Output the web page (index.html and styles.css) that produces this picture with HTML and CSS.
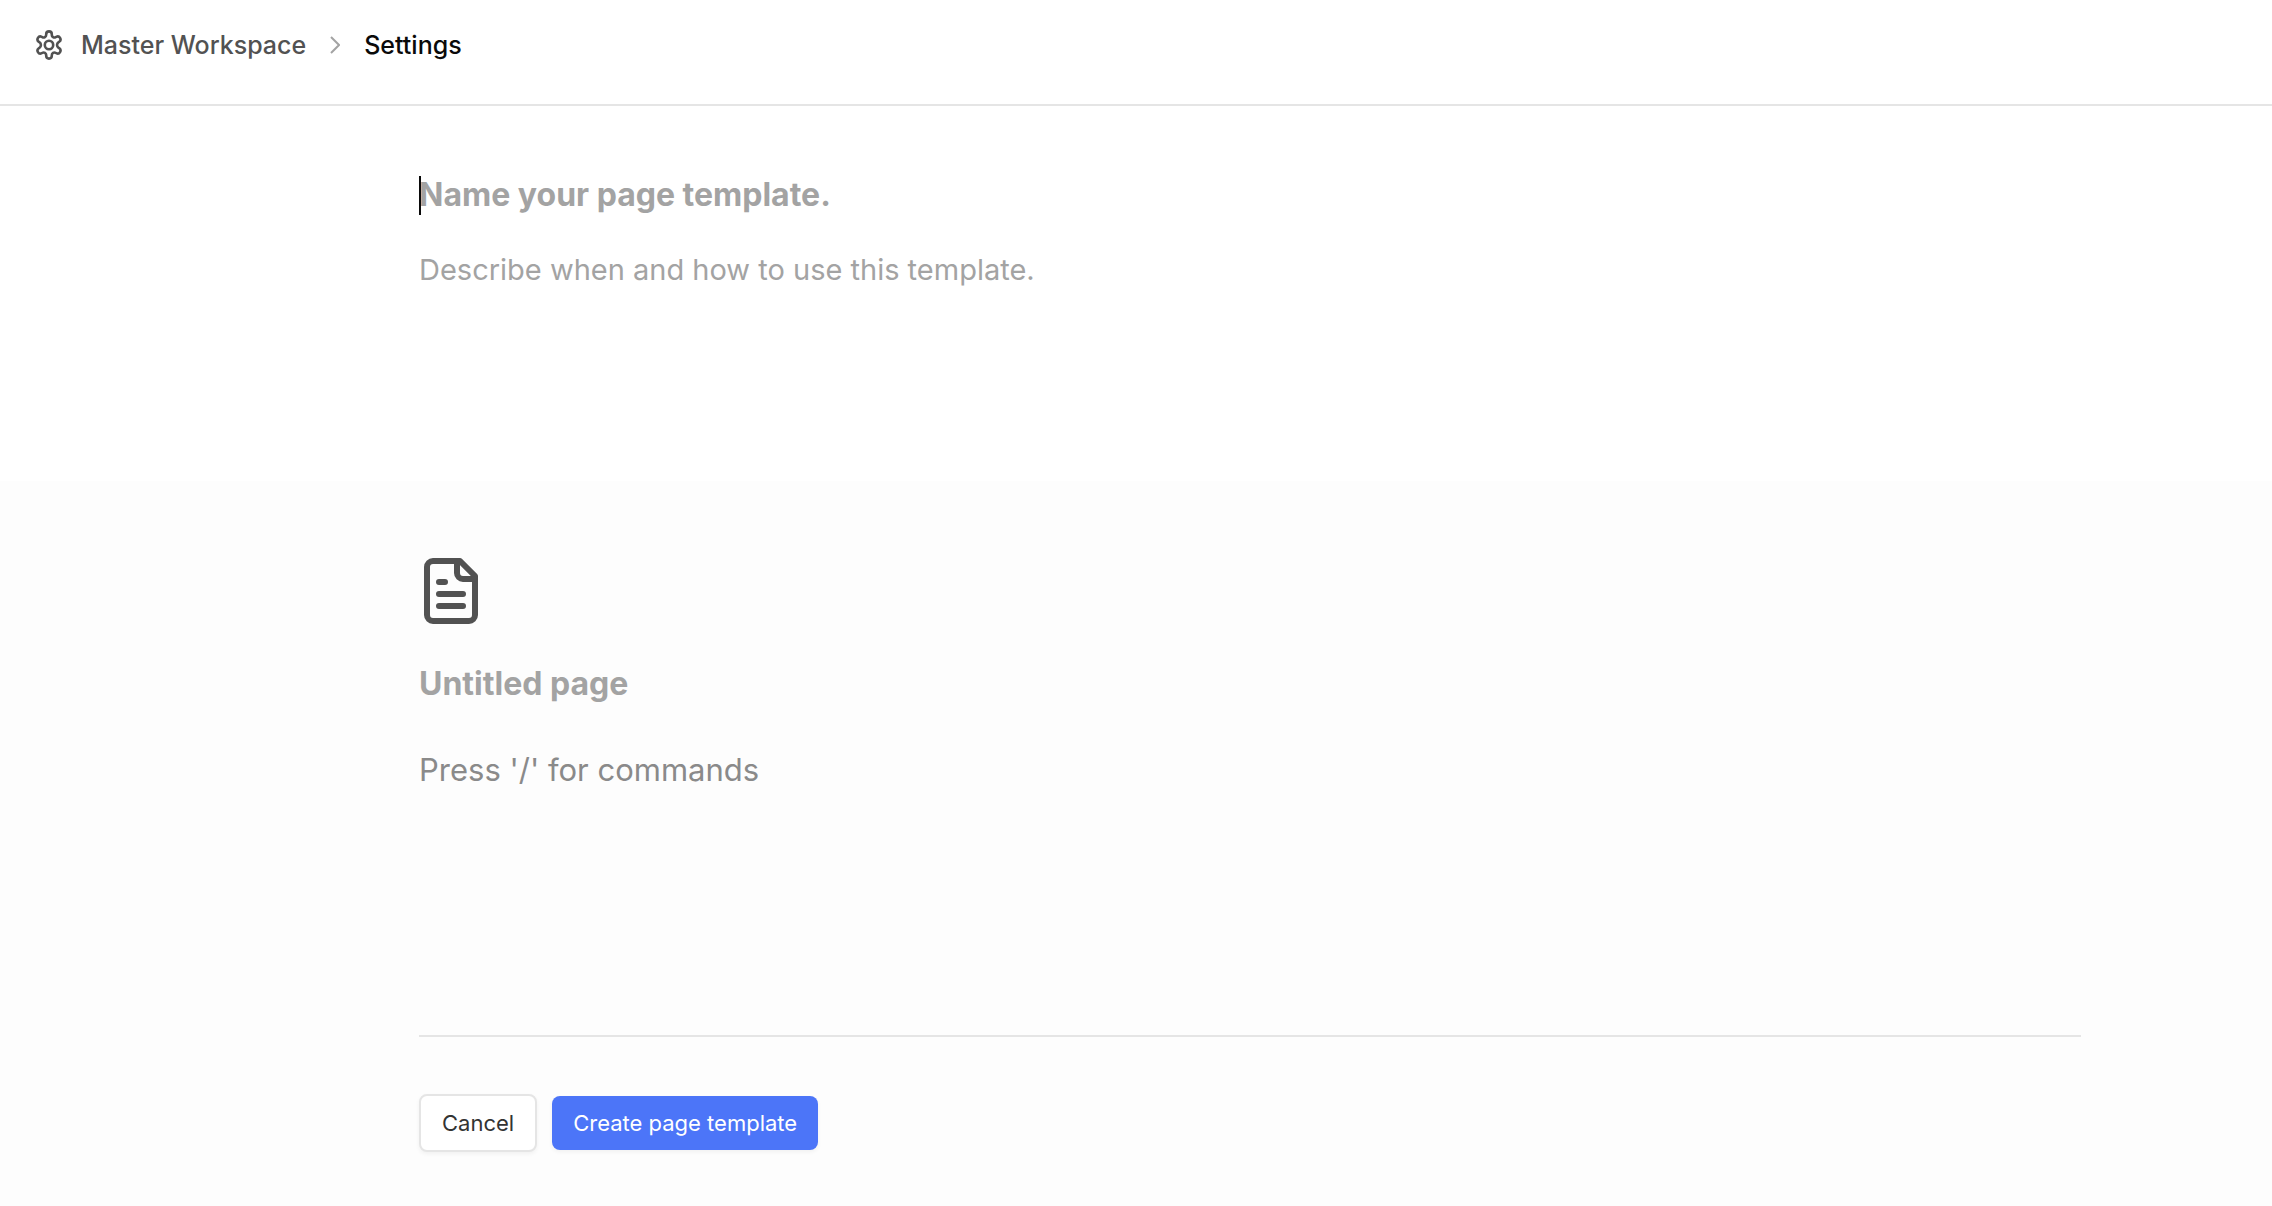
FILE: index.html
```html
<!DOCTYPE html>
<html lang="en">
  <head>
    <meta charset="utf-8">
    <title>Page template</title>
    <link rel="stylesheet" href="styles.css">
  </head>
  <body>
    <header class="topbar">
      <nav class="breadcrumb">
        <a class="crumb" href="#">
          <svg class="gear" viewBox="0 0 28 30" fill="none" stroke="currentColor" stroke-width="2.6" stroke-linejoin="round">
            <circle cx="14" cy="15" r="4.2" />
            <path d="M11.2 4.2a2.8 2.8 0 0 1 5.6 0v.6a2.6 2.6 0 0 0 3.9 2.3l.6-.3a2.9 2.9 0 0 1 2.9 5l-.6.4a3.3 3.3 0 0 0 0 5.6l.6.4a2.9 2.9 0 0 1-2.9 5l-.6-.3a2.6 2.6 0 0 0-3.9 2.3v.6a2.8 2.8 0 0 1-5.6 0v-.6a2.6 2.6 0 0 0-3.9-2.3l-.6.3a2.9 2.9 0 0 1-2.9-5l.6-.4a3.3 3.3 0 0 0 0-5.6l-.6-.4a2.9 2.9 0 0 1 2.9-5l.6.3a2.6 2.6 0 0 0 3.9-2.3z" />
          </svg>
          Master Workspace
        </a>
        <svg class="chevron" viewBox="0 0 10 18" fill="none" stroke="currentColor" stroke-width="2">
          <path d="M1 1l8 8-8 8" />
        </svg>
        <span class="crumb current">Settings</span>
      </nav>
    </header>
    <form class="template" action="#">
      <section class="intro">
        <div class="name-field">
          <input class="title" type="text" name="name" aria-label="Template name" placeholder="Name your page template.">
          <span class="caret"></span>
        </div>
        <textarea class="description" name="description" aria-label="Template description" placeholder="Describe when and how to use this template."></textarea>
      </section>
      <section class="editor">
        <svg class="page-icon" viewBox="0 0 54 66" fill="none" stroke="currentColor" stroke-width="6" stroke-linecap="round" stroke-linejoin="round">
          <path d="M36 3H9a6 6 0 0 0-6 6v48a6 6 0 0 0 6 6h36a6 6 0 0 0 6-6V18z" />
          <path d="M33 4v11a6 6 0 0 0 6 6h11M15 24h6M15 36h24M15 48h24" />
        </svg>
        <input class="title" type="text" name="page" aria-label="Page title" placeholder="Untitled page">
        <textarea class="content" name="content" aria-label="Page content" placeholder="Press '/' for commands"></textarea>
        <div class="actions">
          <button class="btn" type="button">Cancel</button>
          <button class="btn primary" type="submit">Create page template</button>
        </div>
      </section>
    </form>
  </body>
</html>
```

FILE: styles.css
```css
* {
  box-sizing: border-box;
}
body {
  display: flex;
  flex-direction: column;
  min-height: 100vh;
  margin: 0;
  background: #fff;
  color: #0a0a0a;
  font-family: Inter, "Liberation Sans", sans-serif;
}
.topbar {
  padding: 25px 35px 39px;
  border-bottom: 2px solid #e5e5e5;
}
.breadcrumb {
  display: flex;
  align-items: center;
  gap: 24px;
}
.crumb {
  display: flex;
  align-items: center;
  gap: 18px;
  color: #525252;
  font-size: 25px;
  font-weight: 500;
  line-height: 40px;
  text-decoration: none;
}
.crumb.current {
  color: #0a0a0a;
}
.gear {
  width: 28px;
  height: 30px;
}
.chevron {
  width: 10px;
  height: 18px;
  color: #a3a3a3;
}
.template {
  display: flex;
  flex: 1;
  flex-direction: column;
}
.intro,
.editor {
  padding: 68px 191px 48px 419px;
}
.editor {
  flex: 1;
  padding-top: 77px;
  background: #fdfdfd;
}
input,
textarea {
  display: block;
  width: 100%;
  padding: 0;
  border: 0;
  outline: 0;
  background: transparent;
  color: #0a0a0a;
  font-family: inherit;
  resize: none;
}
input::placeholder,
textarea::placeholder {
  color: #a3a3a3;
  opacity: 1;
}
.title {
  height: 42px;
  font-size: 32px;
  font-weight: 700;
  line-height: 42px;
}
.name-field {
  position: relative;
}
.caret {
  position: absolute;
  top: 2px;
  left: 0;
  width: 2px;
  height: 39px;
  background: #0a0a0a;
}
.description {
  height: 184px;
  margin-top: 33px;
  font-size: 29px;
  line-height: 42px;
}
.page-icon {
  display: block;
  width: 54px;
  height: 66px;
  margin: 0 5px 39px;
  color: #525252;
}
.content {
  height: 240px;
  margin-top: 41px;
  font-size: 31px;
  line-height: 48px;
}
.content::placeholder {
  color: #8a8a8a;
}
.actions {
  display: flex;
  align-items: center;
  gap: 15px;
  margin-top: 49px;
  padding-top: 57px;
  border-top: 2px solid #e5e5e5;
}
.btn {
  padding: 11px 21px;
  border: 2px solid #e5e5e5;
  border-radius: 8px;
  background: #fff;
  box-shadow: 0 2px 4px rgba(0, 0, 0, 0.05);
  color: #333;
  font-family: inherit;
  font-size: 22px;
  font-weight: 400;
  line-height: 32px;
}
.btn.primary {
  border: 0;
  background: #4c75f8;
  color: #fff;
}
```
